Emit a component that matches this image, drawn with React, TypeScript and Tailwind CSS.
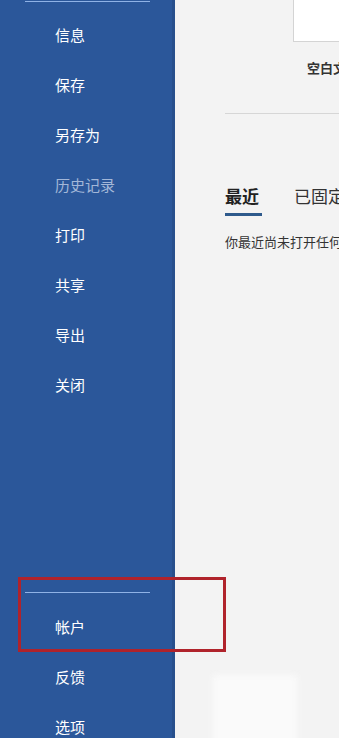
const font = { fontFamily: '"Noto Sans CJK SC", "Noto Sans", sans-serif' }

const topItems = ['信息', '保存', '另存为', '历史记录', '打印', '共享', '导出', '关闭']
const bottomItems = ['帐户', '反馈', '选项']

export default function App() {
  return (
    <div className="relative flex h-[738px] w-[339px] overflow-hidden bg-[#f3f3f3]" style={font}>
      {/* Sidebar */}
      <aside className="flex h-full w-[175px] shrink-0 flex-col bg-[#2b579a] border-r-[3px] border-[#274f8c]">
        <div className="ml-[25px] mt-[1px] h-px w-[125px] shrink-0 bg-[#8fb2e6]" />
        <ul className="mt-[8px] flex shrink-0 flex-col">
          {topItems.map((t) => (
            <li
              key={t}
              className={`flex h-[50px] shrink-0 items-center pl-[55px] text-[15px] ${
                t === '历史记录' ? 'text-[#a3b7d8]' : 'text-white'
              }`}
            >
              {t}
            </li>
          ))}
        </ul>
        <div className="ml-[25px] mt-[182px] h-px w-[125px] shrink-0 bg-[#8fb2e6]" />
        <ul className="mt-[9px] flex shrink-0 flex-col">
          {bottomItems.map((t) => (
            <li key={t} className="flex h-[50px] shrink-0 items-center pl-[55px] text-[15px] text-white">
              {t}
            </li>
          ))}
        </ul>
      </aside>

      {/* Main */}
      <main className="flex flex-1 flex-col pl-[50px]">
        <div className="ml-[68px] h-[42px] shrink-0 border-b border-l border-[#d4d4d4] bg-white" />
        <div className="ml-[82px] mt-[16px] whitespace-nowrap text-[13px] font-bold leading-[20px] text-[#333]">
          空白文档
        </div>
        <div className="mt-[35px] h-px shrink-0 bg-[#d6d6d6]" />
        <div className="mt-[70px] flex items-start gap-[32px] whitespace-nowrap">
          <div className="flex flex-col">
            <span className="text-[17px] font-bold leading-[24px] text-[#222]">最近</span>
            <span className="mt-[5px] h-[3px] w-[37px] bg-[#2e5a8c]" />
          </div>
          <span className="text-[17px] leading-[24px] text-[#333]">已固定</span>
        </div>
        <div className="mt-[16px] whitespace-nowrap text-[13px] leading-[20px] text-[#333]">
          你最近尚未打开任何文档。
        </div>
        <div className="-ml-[12px] mt-[423px] h-[70px] w-[84px] shrink-0 bg-[#fafafa] blur-[3px]" />
      </main>

      {/* Highlight box */}
      <div className="absolute left-[18px] top-[577px] h-[75px] w-[208px] border-[3px] border-[#b0232b]" />
    </div>
  )
}
